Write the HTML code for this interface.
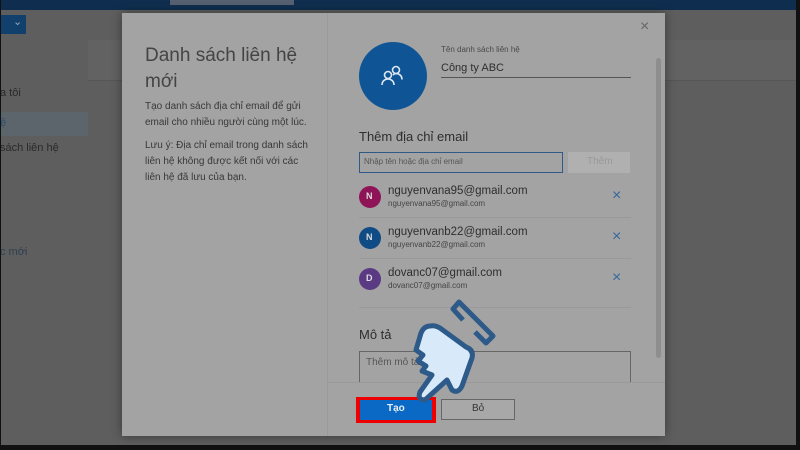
<!DOCTYPE html>
<html><head><meta charset="utf-8"><style>
*{margin:0;padding:0;box-sizing:border-box}
body{width:800px;height:450px;overflow:hidden;background:#5e5e5e;font-family:"Liberation Sans","DejaVu Sans",sans-serif;position:relative;color:#333}
.a{position:absolute}
.t{position:absolute;white-space:nowrap}
</style></head><body>
<div class="a" style="left:0;top:0;width:800px;height:10px;background:#0f2e4f"></div>
<div class="a" style="left:170px;top:0;width:124px;height:5px;background:#566070"></div>
<div class="a" style="left:0;top:15px;width:26px;height:19px;background:#11406d"></div>
<div class="t" style="left:13px;top:15px;color:#9ab;font-size:11px">⌄</div>
<div class="a" style="left:88px;top:40px;width:712px;height:40px;background:#626262"></div>
<div class="a" style="left:88px;top:80px;width:712px;height:1px;background:#565656"></div>
<div class="a" style="left:0;top:112px;width:88px;height:24px;background:#5c646c"></div>
<div class="t" style="left:0;top:87px;font-size:11px;color:#2a2a2a">a tôi</div>
<div class="t" style="left:0;top:117px;font-size:11px;color:#2e4e6e">ệ</div>
<div class="t" style="left:0;top:142px;font-size:11px;color:#2a2a2a">sách liên hệ</div>
<div class="t" style="left:0;top:246px;font-size:11px;color:#2e3e50">c mới</div>
<div class="a" style="left:796px;top:0;width:4px;height:450px;background:#111"></div>
<div class="a" style="left:0;top:445px;width:800px;height:5px;background:#111"></div>
<div class="a" style="left:0;top:0;width:1px;height:450px;background:#111"></div>

<div class="a" style="left:122px;top:13px;width:543px;height:423px;background:#a3a3a3;box-shadow:0 0 10px rgba(0,0,0,.4)"></div>
<div class="a" style="left:327px;top:13px;width:1px;height:423px;background:#9a9a9a"></div>
<div class="t" style="left:145px;top:43px;font-size:19px;color:#444;line-height:26px">Danh sách liên hệ<br>mới</div>
<div class="t" style="left:145px;top:99px;font-size:10px;color:#383838;line-height:16px">Tạo danh sách địa chỉ email để gửi<br>email cho nhiều người cùng một lúc.</div>
<div class="t" style="left:145px;top:138px;font-size:10px;color:#383838;line-height:16px">Lưu ý: Địa chỉ email trong danh sách<br>liên hệ không được kết nối với các<br>liên hệ đã lưu của bạn.</div>

<div class="t" style="left:640px;top:18px;font-size:16px;color:#666">×</div>
<div class="a" style="left:656px;top:58px;width:5px;height:300px;background:#8e8e8e;border-radius:3px"></div>
<div class="a" style="left:359px;top:42px;width:68px;height:68px;border-radius:50%;background:#0f5595"></div>
<svg class="a" style="left:378px;top:61px" width="30" height="30" viewBox="0 0 30 30" fill="none" stroke="#dfe8f0" stroke-width="1.6"><circle cx="10" cy="14" r="3.5"/><path d="M4 24c0-4 3-6 6-6s6 2 6 6"/><circle cx="18" cy="9" r="3.5"/><path d="M15 14c1-1 2-1.5 3-1.5 3 0 6 2 6 6"/></svg>
<div class="t" style="left:441px;top:45px;font-size:8px;color:#4a4a4a">Tên danh sách liên hệ</div>
<div class="t" style="left:441px;top:62px;font-size:11px;color:#2e2e2e">Công ty ABC</div>
<div class="a" style="left:441px;top:77px;width:190px;height:1px;background:#555"></div>
<div class="t" style="left:359px;top:129px;font-size:13px;color:#2e2e2e">Thêm địa chỉ email</div>
<div class="a" style="left:359px;top:152px;width:204px;height:21px;border:1px solid #2e5a86"></div>
<div class="t" style="left:364px;top:157px;font-size:8px;color:#555">Nhập tên hoặc địa chỉ email</div>
<div class="a" style="left:568px;top:152px;width:62px;height:21px;background:#b0b0b0"></div>
<div class="t" style="left:587px;top:156px;font-size:10px;color:#999">Thêm</div>

<div class="a" style="left:359px;top:186px;width:22px;height:22px;border-radius:50%;background:#8f1457"></div>
<div class="t" style="left:366px;top:191px;font-size:9px;color:#ddd;font-weight:bold">N</div>
<div class="t" style="left:388px;top:185px;font-size:11.5px;color:#2e2e2e">nguyenvana95@gmail.com</div>
<div class="t" style="left:388px;top:199px;font-size:8px;color:#444">nguyenvana95@gmail.com</div>
<div class="t" style="left:612px;top:187px;font-size:16px;color:#36689a">×</div>
<div class="a" style="left:359px;top:217px;width:272px;height:1px;background:#999"></div>

<div class="a" style="left:359px;top:227px;width:22px;height:22px;border-radius:50%;background:#0f4b84"></div>
<div class="t" style="left:366px;top:232px;font-size:9px;color:#ddd;font-weight:bold">N</div>
<div class="t" style="left:388px;top:226px;font-size:11.5px;color:#2e2e2e">nguyenvanb22@gmail.com</div>
<div class="t" style="left:388px;top:240px;font-size:8px;color:#444">nguyenvanb22@gmail.com</div>
<div class="t" style="left:612px;top:228px;font-size:16px;color:#36689a">×</div>
<div class="a" style="left:359px;top:258px;width:272px;height:1px;background:#999"></div>

<div class="a" style="left:359px;top:268px;width:22px;height:22px;border-radius:50%;background:#5b3a84"></div>
<div class="t" style="left:366px;top:273px;font-size:9px;color:#ddd;font-weight:bold">D</div>
<div class="t" style="left:388px;top:267px;font-size:11.5px;color:#2e2e2e">dovanc07@gmail.com</div>
<div class="t" style="left:388px;top:281px;font-size:8px;color:#444">dovanc07@gmail.com</div>
<div class="t" style="left:612px;top:269px;font-size:16px;color:#36689a">×</div>
<div class="a" style="left:359px;top:307px;width:272px;height:1px;background:#999"></div>

<div class="t" style="left:359px;top:327px;font-size:13px;color:#2e2e2e">Mô tả</div>
<div class="a" style="left:359px;top:351px;width:272px;height:31px;border:1px solid #666;border-bottom:none"></div>
<div class="t" style="left:366px;top:357px;font-size:10px;color:#555">Thêm mô tả</div>
<div class="a" style="left:327px;top:382px;width:338px;height:1px;background:#999"></div>

<div class="a" style="left:356px;top:397px;width:80px;height:26px;background:#e00;"></div>
<div class="a" style="left:360px;top:400px;width:72px;height:20px;background:#0a69c5"></div>
<div class="t" style="left:387px;top:403px;font-size:10px;color:#e8eef6;font-weight:bold">Tạo</div>
<div class="a" style="left:441px;top:399px;width:74px;height:21px;border:1px solid #666;background:#a8a8a8"></div>
<div class="t" style="left:472px;top:403px;font-size:10px;color:#333">Bỏ</div>

<svg class="a" style="left:0;top:0" width="800" height="450" viewBox="0 0 800 450">
<path d="M463 320 L453 309 L459 302 L493 336 L486 343 L475 332" fill="none" stroke="#2d5a88" stroke-width="5" stroke-linejoin="round"/>
<path d="M430 326 Q424 326 421 333 L416 350 L423 355 L418 361 L426 366 L422 371 L432 375 L420 392 Q417 400 425 400 L447 380 L452 390 Q458 394 462 386 L472 358 Q474 350 466 347 L440 328 Q435 325 430 326 Z" fill="#d8eafa" stroke="#2d5a88" stroke-width="5" stroke-linejoin="round"/>
</svg>
</body></html>
